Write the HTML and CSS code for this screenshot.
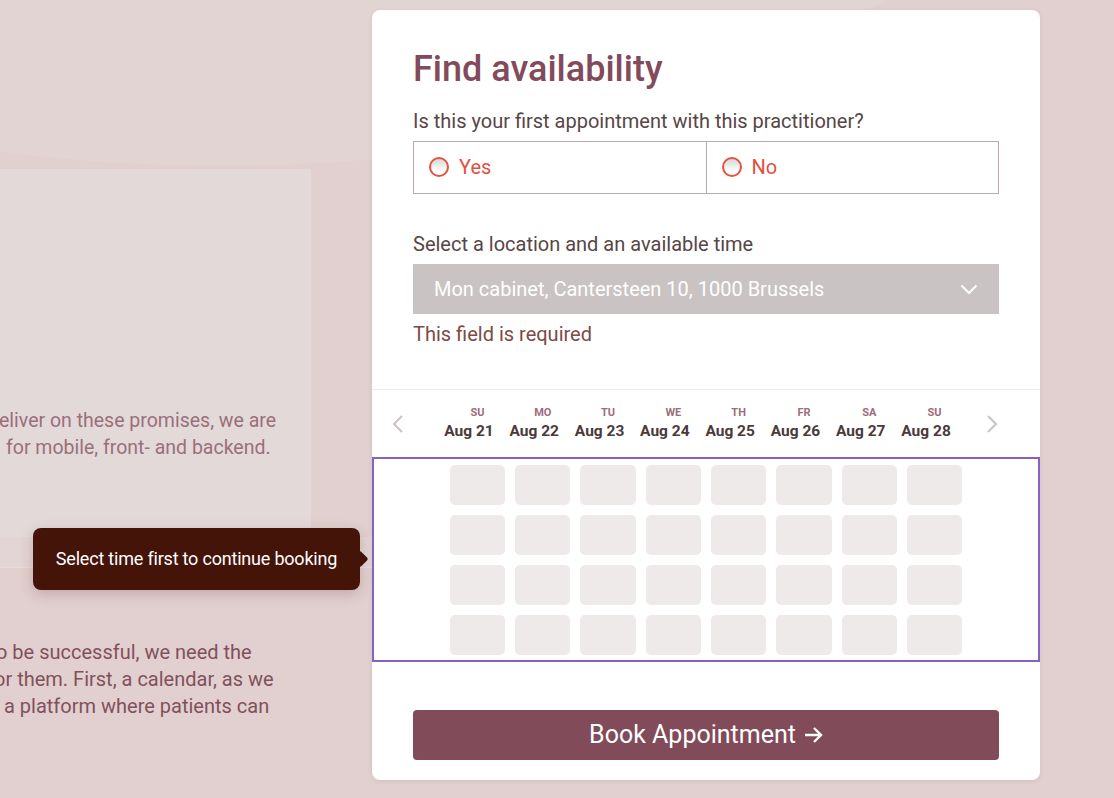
FILE: index.html
```html
<!DOCTYPE html>
<html lang="en">
<head>
<meta charset="utf-8">
<title>Find availability</title>
<link rel="stylesheet" href="styles.css">
</head>
<body>
<div class="page">
  <div class="bg-wave"></div>
  <aside class="side">
    <div class="hero"></div>
    <div class="panel">
      <div class="line l1">eliver on these promises, we are</div>
      <div class="line l2">for mobile, front- and backend.</div>
    </div>
    <div class="strip"></div>
    <div class="lower">
      <div class="line l3">o be successful, we need the</div>
      <div class="line l4">or them. First, a calendar, as we</div>
      <div class="line l5">a platform where patients can</div>
    </div>
    <div class="tooltip">Select time first to continue booking</div>
  </aside>

  <main class="card">
    <div class="form">
      <h1 class="title">Find availability</h1>
      <p class="label">Is this your first appointment with this practitioner?</p>
      <div class="radios">
        <label class="radio"><span class="dot"></span><span>Yes</span></label>
        <label class="radio"><span class="dot"></span><span>No</span></label>
      </div>
      <p class="label label-loc">Select a location and an available time</p>
      <div class="select">
        <span>Mon cabinet, Cantersteen 10, 1000 Brussels</span>
        <svg class="chev" width="18" height="11" viewBox="0 0 18 11"><path d="M1.5 1.5 L9 9 L16.5 1.5" fill="none" stroke="#fff" stroke-width="2"/></svg>
      </div>
      <p class="error">This field is required</p>
    </div>

    <div class="cal-head">
      <div class="nav nav-prev"><svg width="12" height="18" viewBox="0 0 12 18"><path d="M10 1 L2 9 L10 17" fill="none" stroke="#c9c2c9" stroke-width="2"/></svg></div>
      <div class="days">
        <div class="day"><span class="dw">SU</span><span class="dd">Aug 21</span></div>
        <div class="day"><span class="dw">MO</span><span class="dd">Aug 22</span></div>
        <div class="day"><span class="dw">TU</span><span class="dd">Aug 23</span></div>
        <div class="day"><span class="dw">WE</span><span class="dd">Aug 24</span></div>
        <div class="day"><span class="dw">TH</span><span class="dd">Aug 25</span></div>
        <div class="day"><span class="dw">FR</span><span class="dd">Aug 26</span></div>
        <div class="day"><span class="dw">SA</span><span class="dd">Aug 27</span></div>
        <div class="day"><span class="dw">SU</span><span class="dd">Aug 28</span></div>
      </div>
      <div class="nav nav-next"><svg width="12" height="18" viewBox="0 0 12 18"><path d="M2 1 L10 9 L2 17" fill="none" stroke="#c9c2c9" stroke-width="2"/></svg></div>
    </div>

    <div class="slots">
      <div class="grid">
        <div class="slot"></div><div class="slot"></div><div class="slot"></div><div class="slot"></div><div class="slot"></div><div class="slot"></div><div class="slot"></div><div class="slot"></div>
        <div class="slot"></div><div class="slot"></div><div class="slot"></div><div class="slot"></div><div class="slot"></div><div class="slot"></div><div class="slot"></div><div class="slot"></div>
        <div class="slot"></div><div class="slot"></div><div class="slot"></div><div class="slot"></div><div class="slot"></div><div class="slot"></div><div class="slot"></div><div class="slot"></div>
        <div class="slot"></div><div class="slot"></div><div class="slot"></div><div class="slot"></div><div class="slot"></div><div class="slot"></div><div class="slot"></div><div class="slot"></div>
      </div>
    </div>

    <div class="actions">
      <button class="book">Book Appointment <svg class="arrow" width="19" height="18" viewBox="0 0 19 18"><path d="M1 9 H17 M10 2 L17 9 L10 16" fill="none" stroke="#fff" stroke-width="2.4"/></svg></button>
    </div>
  </main>
</div>
</body>
</html>
```

FILE: styles.css
```css
* { box-sizing: border-box; }
html, body { margin: 0; padding: 0; }
body {
  background: #e1d0cf;
  font-family: Roboto, "Liberation Sans", sans-serif;
  width: 1114px;
  height: 798px;
  overflow: hidden;
}
.page {
  position: relative;
  display: flex;
  width: 1114px;
  height: 798px;
  overflow: hidden;
}
.bg-wave {
  position: absolute;
  left: -600px;
  top: -634px;
  width: 1640px;
  height: 800px;
  border-radius: 50%;
  background: #e3d4d4;
  z-index: 0;
}
.side {
  position: relative;
  width: 372px;
  flex: none;
  z-index: 1;
}
.hero { height: 169px; }
.panel {
  width: 311px;
  height: 368px;
  background: #e4d9d9;
  padding-top: 238px;
}
.strip {
  width: 372px;
  height: 31px;
  background: #e3d5d5;
  border-bottom: 1px solid #e8dbd8;
}
.line {
  font-size: 19.5px;
  line-height: 27px;
  white-space: nowrap;
}
.panel .line { color: #9a6f7c; }
.l1 { margin-left: -1px; }
.l2 { margin-left: 6px; }
.lower { padding-top: 71px; }
.lower .line { color: #82505c; font-size: 20px; }
.l3 { margin-left: -4px; }
.l4 { margin-left: -6px; }
.l5 { margin-left: 4px; }

.tooltip {
  position: absolute;
  left: 33px;
  top: 528px;
  width: 327px;
  height: 62px;
  background: #451409;
  color: #fff;
  border-radius: 8px;
  font-size: 18px;
  line-height: 62px;
  text-align: center;
  box-shadow: 0 4px 14px rgba(80, 30, 30, 0.22);
  letter-spacing: -0.2px;
}
.tooltip::after {
  content: "";
  position: absolute;
  right: -6px;
  top: 25px;
  width: 12px;
  height: 12px;
  background: #451409;
  transform: rotate(45deg);
  border-radius: 2px;
}

.card {
  position: relative;
  z-index: 1;
  margin-top: 10px;
  width: 668px;
  height: 770px;
  background: #fff;
  border-radius: 8px;
  box-shadow: 0 1px 4px rgba(90, 50, 50, 0.10);
  padding-top: 38px;
}
.form { padding: 0 41px; }
.title {
  margin: 0;
  font-size: 36px;
  line-height: 43px;
  font-weight: 500;
  color: #824a5b;
}
.label {
  margin: 18px 0 8px;
  font-size: 20px;
  line-height: 24px;
  color: #574646;
}
.radios {
  display: flex;
  height: 53px;
  border: 1px solid #b9abab;
}
.radio {
  flex: 1;
  display: flex;
  align-items: center;
  gap: 10px;
  padding-left: 15px;
  padding-bottom: 1px;
  font-size: 20px;
  color: #e0503e;
}
.radio + .radio { border-left: 1px solid #b9abab; }
.dot {
  width: 20px;
  height: 20px;
  border-radius: 50%;
  border: 2px solid #e3533f;
  background: linear-gradient(#d6d6d6, #ffffff 75%);
}
.label-loc { margin-top: 38px; }
.select {
  height: 50px;
  background: #c9c3c3;
  display: flex;
  align-items: center;
  justify-content: space-between;
  padding: 0 21px;
  color: #fff;
  font-size: 20px;
}
.error {
  margin: 8px 0 0;
  font-size: 20px;
  line-height: 24px;
  color: #7d4a44;
}

.cal-head {
  margin-top: 43px;
  border-top: 1px solid #ececec;
  display: flex;
  align-items: flex-start;
  height: 68px;
}
.nav {
  width: 78px;
  height: 68px;
  display: flex;
  align-items: center;
}
.nav-prev { padding-left: 20px; }
.nav-next { padding-left: 24px; }
.days {
  display: grid;
  grid-template-columns: repeat(8, 55.3px);
  column-gap: 10px;
  padding-top: 16px;
}
.day {
  display: flex;
  flex-direction: column;
  align-items: center;
  white-space: nowrap;
}
.dw {
  font-size: 11px;
  line-height: 13px;
  font-weight: 700;
  color: #9c6d7b;
}
.dd {
  margin-top: 3px;
  margin-right: 17px;
  font-size: 15.5px;
  line-height: 19px;
  font-weight: 700;
  color: #4b3a3a;
}

.slots {
  border: 2px solid #8462c6;
  padding: 6px 0 5px;
}
.grid {
  display: grid;
  grid-template-columns: repeat(8, 55.3px);
  grid-auto-rows: 40px;
  gap: 10px;
  justify-content: center;
}
.slot {
  background: #eeeaea;
  border-radius: 5px;
}

.actions { padding: 48px 41px 0; }
.book {
  width: 100%;
  height: 50px;
  border: 0;
  border-radius: 4px;
  background: #824b59;
  color: #fff;
  font-family: Roboto, "Liberation Sans", sans-serif;
  font-size: 25px;
  padding: 0 0 1px;
  display: flex;
  align-items: center;
  justify-content: center;
  gap: 8px;
}
.arrow { margin-top: 1px; }
```
